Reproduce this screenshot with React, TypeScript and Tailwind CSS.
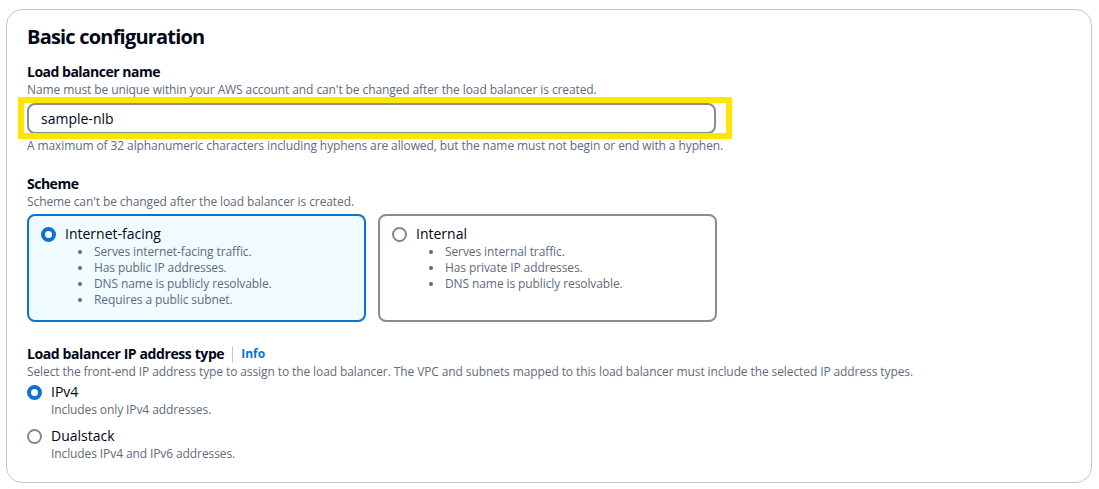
import React from "react";

const font = { fontFamily: "'Open Sans', 'Noto Sans', sans-serif" };

const Radio = ({ checked }: { checked: boolean }) =>
  checked ? (
    <span className="block w-[15px] h-[15px] shrink-0 rounded-full border-[4.5px] border-[#0972d3] bg-white" />
  ) : (
    <span className="block w-[15px] h-[15px] shrink-0 rounded-full border-2 border-[#7d8998] bg-white" />
  );

const Tile = ({
  title,
  items,
  checked,
}: {
  title: string;
  items: string[];
  checked: boolean;
}) => (
  <div
    className={
      checked
        ? "w-[339px] h-[108px] rounded-lg border-2 border-[#0972d3] bg-[#f0fbff] pl-[12px] pt-[8px]"
        : "w-[339px] h-[108px] rounded-lg border-2 border-[#8c8c94] bg-white pl-[12px] pt-[8px]"
    }
  >
    <div className="flex items-center gap-[9px]">
      <Radio checked={checked} />
      <span className="text-[14px] leading-[20px] text-[#000716]">{title}</span>
    </div>
    <ul>
      {items.map((t) => (
        <li key={t} className="flex items-center text-[12px] leading-[16px] tracking-[-0.1px] text-[#5f6b7a]">
          <span className="ml-[37px] mr-[12px] w-[4px] h-[4px] rounded-full bg-[#5f6b7a]" />
          {t}
        </li>
      ))}
    </ul>
  </div>
);

const Option = ({ title, desc, checked }: { title: string; desc: string; checked: boolean }) => (
  <div>
    <div className="flex items-center gap-[9px]">
      <Radio checked={checked} />
      <span className="text-[14px] leading-[20px] text-[#000716]">{title}</span>
    </div>
    <div className="pl-[24px] text-[12px] leading-[16px] tracking-[-0.1px] text-[#5f6b7a]">{desc}</div>
  </div>
);

export default function App() {
  return (
    <div className="bg-white w-[1099px] h-[489px] pt-[9px] pl-[6px]" style={font}>
      <div className="w-[1086px] h-[474px] rounded-[16px] border border-[#c6c6cd] pl-[20px] pt-[14px]">
        <h2 className="text-[20px] leading-[26px] font-bold tracking-[-0.8px] text-[#000716]">Basic configuration</h2>

        <div className="mt-[12px] text-[14px] leading-[20px] font-bold tracking-[-0.5px] text-[#000716]">
          Load balancer name
        </div>
        <div className="text-[12px] leading-[16px] tracking-[-0.1px] text-[#5f6b7a]">
          Name must be unique within your AWS account and can't be changed after the load balancer is created.
        </div>
        <div className="relative mt-[5px] w-[689px]">
          <div className="h-[31px] rounded-lg border-2 border-[#8c8c94] bg-white pl-[12px] flex items-center text-[14px] text-[#000716]">
            sample-nlb
          </div>
          <div className="absolute left-[-9px] top-[-6px] w-[714px] h-[42px] border-[6px] border-[#ffe600] pointer-events-none" />
        </div>
        <div className="mt-[4px] text-[12px] leading-[16px] tracking-[-0.1px] text-[#5f6b7a]">
          A maximum of 32 alphanumeric characters including hyphens are allowed, but the name must not begin or end with a hyphen.
        </div>

        <div className="mt-[20px] text-[14px] leading-[20px] font-bold tracking-[-0.5px] text-[#000716]">Scheme</div>
        <div className="text-[12px] leading-[16px] tracking-[-0.1px] text-[#5f6b7a]">
          Scheme can't be changed after the load balancer is created.
        </div>
        <div className="mt-[4px] flex gap-[12px]">
          <Tile
            checked
            title="Internet-facing"
            items={[
              "Serves internet-facing traffic.",
              "Has public IP addresses.",
              "DNS name is publicly resolvable.",
              "Requires a public subnet.",
            ]}
          />
          <Tile
            checked={false}
            title="Internal"
            items={["Serves internal traffic.", "Has private IP addresses.", "DNS name is publicly resolvable."]}
          />
        </div>

        <div className="mt-[22px] flex items-center text-[14px] leading-[20px] font-bold text-[#000716]">
          <span className="tracking-[-0.4px]">Load balancer IP address type</span>
          <span className="mx-[8px] w-px h-[16px] bg-[#c6c6cd]" />
          <span className="text-[12px] text-[#0972d3]">Info</span>
        </div>
        <div className="text-[12px] leading-[16px] tracking-[-0.1px] text-[#5f6b7a]">
          Select the front-end IP address type to assign to the load balancer. The VPC and subnets mapped to this load balancer must include the selected IP address types.
        </div>
        <div className="mt-[2px] flex flex-col gap-[8px]">
          <Option checked title="IPv4" desc="Includes only IPv4 addresses." />
          <Option checked={false} title="Dualstack" desc="Includes IPv4 and IPv6 addresses." />
        </div>
      </div>
    </div>
  );
}
